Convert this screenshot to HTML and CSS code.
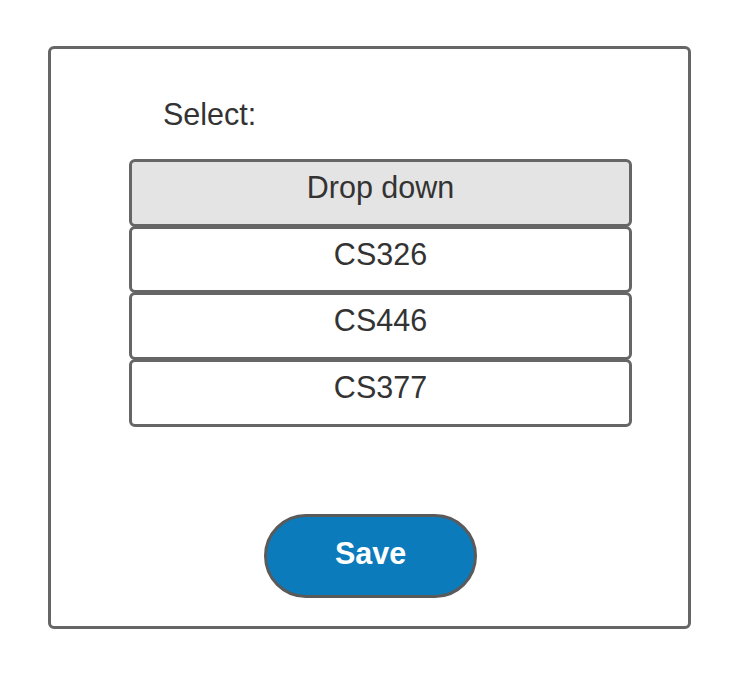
FILE: index.html
```html
<!DOCTYPE html>
<html>
<head>
<meta charset="utf-8">
<link rel="stylesheet" href="styles.css">
</head>
<body>
<div class="panel">
  <div class="label">Select:</div>
  <div class="list">
    <div class="row head">Drop down</div>
    <div class="row">CS326</div>
    <div class="row">CS446</div>
    <div class="row">CS377</div>
  </div>
  <div class="actions">
    <button class="save">Save</button>
  </div>
</div>
</body>
</html>
```

FILE: styles.css
```css
html, body {
  margin: 0;
  padding: 0;
  background: #ffffff;
}
body {
  font-family: "Liberation Sans", Arial, sans-serif;
  color: #333333;
  padding: 46px 0 0 48px;
}
.panel {
  box-sizing: border-box;
  width: 643px;
  height: 583px;
  border: 3px solid #666666;
  border-radius: 6px;
  padding: 0 0 0 78px;
  display: flex;
  flex-direction: column;
}
.label {
  font-size: 30.5px;
  margin: 48px 0 0 34px;
  line-height: 34px;
}
.list {
  width: 503px;
  margin-top: 28px;
  display: flex;
  flex-direction: column;
}
.row {
  box-sizing: border-box;
  height: 67.67px;
  border: 3px solid #666666;
  border-radius: 6px;
  background: #ffffff;
  display: flex;
  justify-content: center;
  padding-top: 9px;
  font-size: 30.5px;
  line-height: 32px;
}
.row + .row {
  margin-top: -1px;
}
.row.head {
  background: #e4e4e4;
}
.actions {
  display: flex;
  margin-top: 87px;
  padding-left: 135px;
}
.save {
  box-sizing: border-box;
  width: 213px;
  height: 84px;
  border: 3px solid #5a5a5a;
  border-radius: 42px;
  background: #0c7bbb;
  color: #ffffff;
  font-family: "Liberation Sans", Arial, sans-serif;
  font-weight: bold;
  font-size: 30.5px;
  padding: 0 0 5px 0;
}
```
